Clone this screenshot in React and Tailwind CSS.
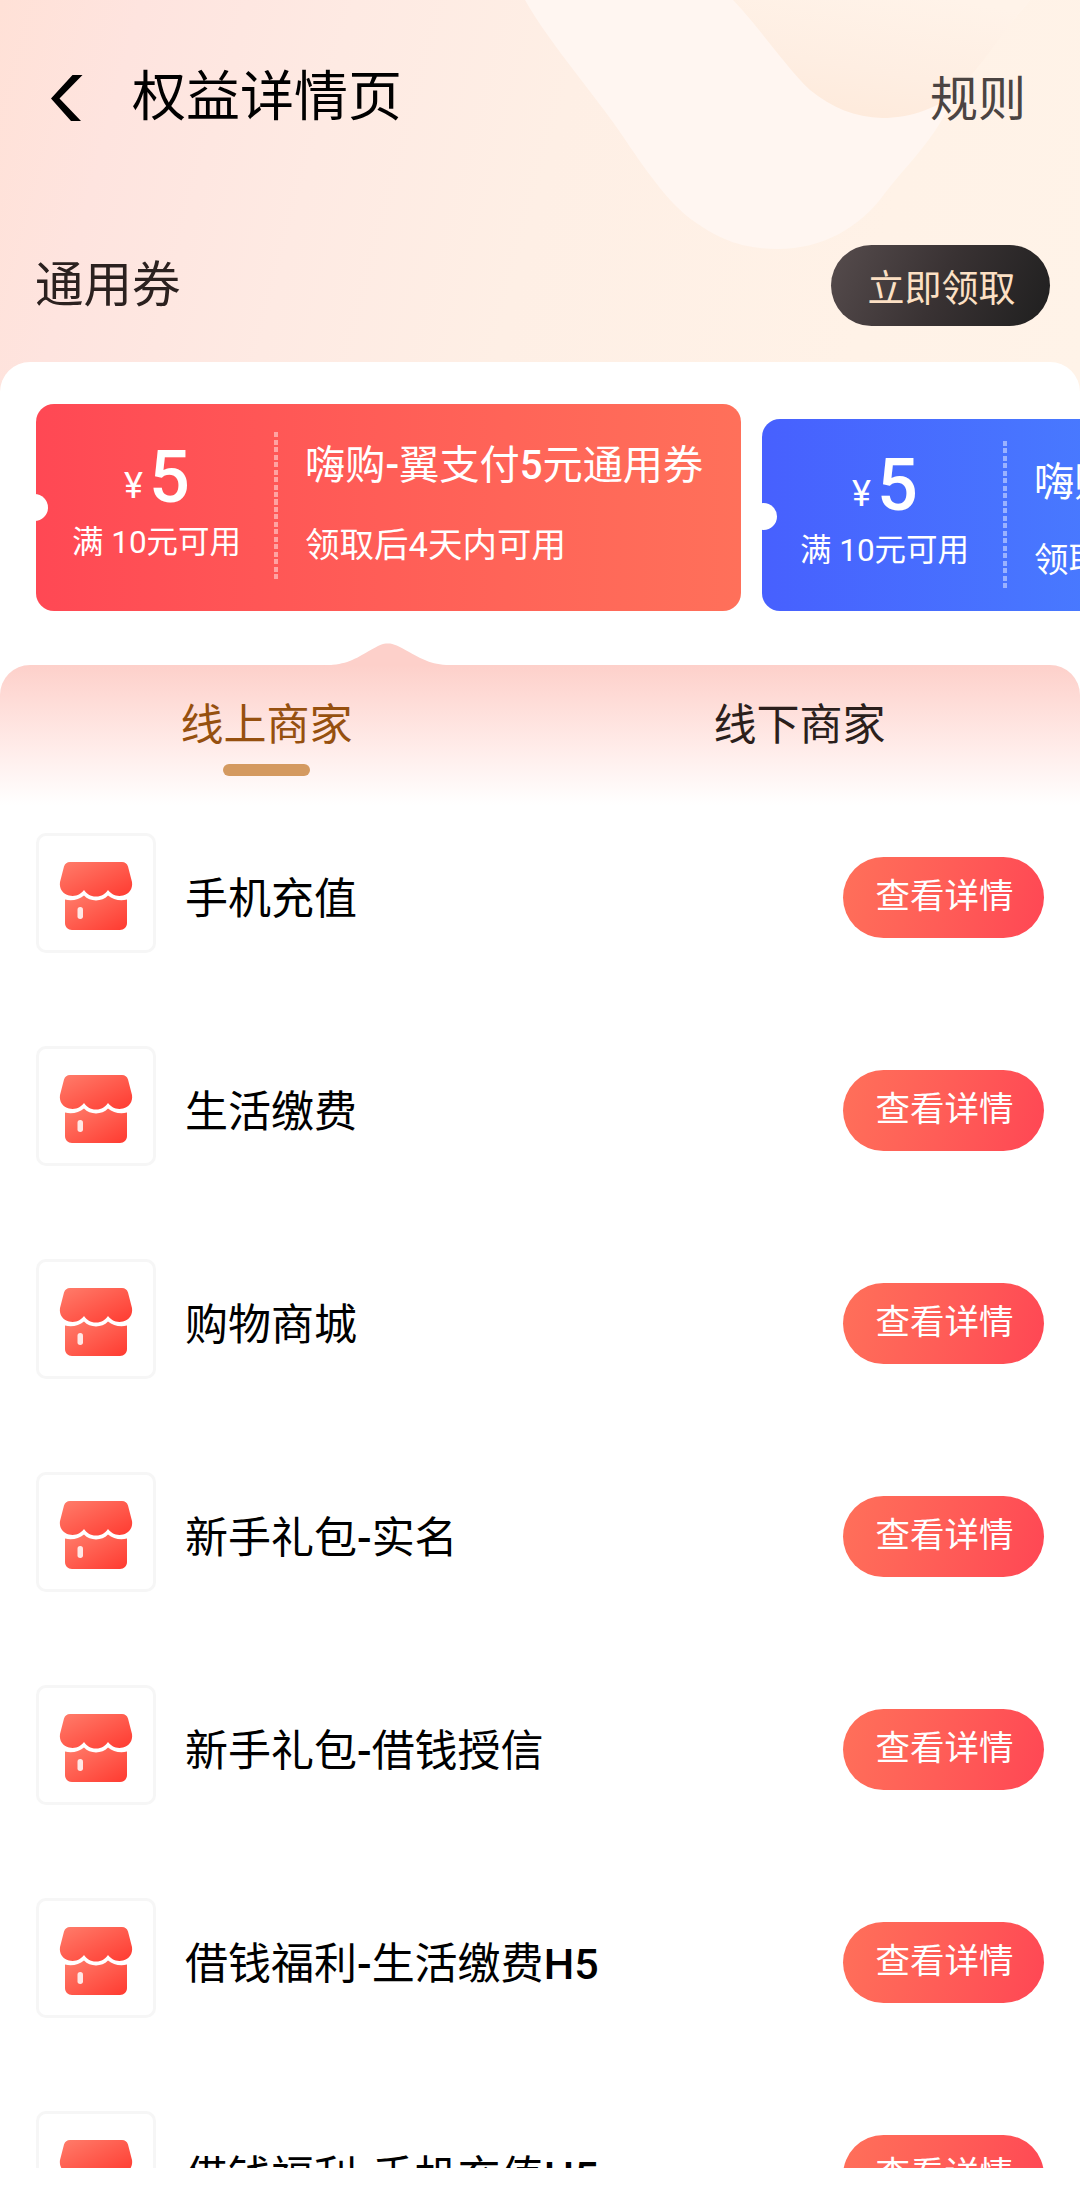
import React from "react";

const MERCHANTS = [
  "手机充值",
  "生活缴费",
  "购物商城",
  "新手礼包-实名",
  "新手礼包-借钱授信",
  "借钱福利-生活缴费H5",
  "借钱福利-手机充值H5",
];

// latin letters, digits and dashes are set heavier than the Chinese text
function MixedText({ children }) {
  return children.split(/([A-Za-z0-9-]+)/).map((part, i) =>
    i % 2 ? (
      <span key={i} className="font-medium">
        {part}
      </span>
    ) : (
      part
    )
  );
}

function HeaderRibbon() {
  return (
    <svg className="absolute inset-0 w-full h-full" viewBox="0 0 1080 400" preserveAspectRatio="none" aria-hidden="true">
      <defs>
        <linearGradient id="petal" x1="0.3" y1="1" x2="0.75" y2="0">
          <stop offset="0" stopColor="#feeadb" />
          <stop offset="0.4" stopColor="#feeee2" />
          <stop offset="1" stopColor="#fff3e9" />
        </linearGradient>
      </defs>
      <path
        d="M525 0H1030C1000 35 965 78 940 123C925 148 907 165 885 193C860 228 822 249 778 249C738 249 715 236 695 222C672 206 655 183 630 147C600 100 550 45 525 0Z"
        fill="#fff6f1"
      />
      <path d="M733 0H1030C1005 28 985 62 958 90C940 108 910 118 882 118C855 117 832 108 810 90C785 66 760 28 733 0Z" fill="url(#petal)" />
    </svg>
  );
}

function StoreIcon() {
  return (
    <svg className="w-[74px] h-[70px]" viewBox="0 0 74 70" aria-hidden="true">
      <defs>
        <linearGradient id="store" x1="0" y1="0" x2="1" y2="1">
          <stop offset="0" stopColor="#ff7d6b" />
          <stop offset="1" stopColor="#ff3a30" />
        </linearGradient>
      </defs>
      <path
        d="M11 1H63C66 1 68 2.500 69 5.500L73 21C74 28 70 33 64 34.500C57 36 52 33 49 29C46 33 43 35.500 37 35.500C31 35.500 28 33 25 29C22 33 17 36 10 34.500C4 33 0 28 1 21L5 5.500C6 2.500 8 1 11 1Z"
        fill="url(#store)"
      />
      <path
        d="M6 38.500C13 40.500 20 38.500 25 34.500C31 41 43 41 49 34.500C54 38.500 61 40.500 68 38.500V62C68 66 65 69 61 69H13C9 69 6 66 6 62Z"
        fill="url(#store)"
      />
      <rect x="18.500" y="46" width="5.500" height="12" rx="2.700" fill="#fff" fillOpacity="0.85" />
    </svg>
  );
}

function Amount({ className }) {
  return (
    <div className={`w-[240px] shrink-0 flex flex-col items-center ${className}`}>
      <div className="flex items-baseline gap-[6px] pl-[2px] h-[72px] leading-[72px]">
        <span className="relative -top-[4px] text-[36px]">¥</span>
        <span className="text-[72px] font-medium">5</span>
      </div>
      <div className="mt-[9px] pl-[1px] h-[40px] leading-[40px] text-[31.5px]">满 10元可用</div>
    </div>
  );
}

function DottedLine({ className }) {
  return (
    <div
      className={`w-[4px] h-[149px] shrink-0 bg-[repeating-linear-gradient(to_bottom,rgba(255,255,255,0.45)_0_5px,transparent_5px_7.5px)] ${className}`}
    />
  );
}

function Notch({ className }) {
  return <div className={`absolute w-[27px] h-[27px] rounded-full bg-white ${className}`} />;
}

function Coupons() {
  return (
    <div className="flex items-end gap-[21px] pl-[36px] h-[249px] shrink-0 pt-[42px] overflow-hidden text-white">
      <div className="relative flex w-[705px] h-[207px] shrink-0 rounded-[18px] bg-linear-to-r from-[#ff4854] to-[#ff705a]">
        <Notch className="left-[-15px] top-[90px]" />
        <Amount className="pt-[38px]" />
        <DottedLine className="mt-[28px] -ml-[2px]" />
        <div className="pl-[27px] pt-[37px]">
          <div className="h-[50px] leading-[50px] text-[40.2px] whitespace-nowrap">
            <MixedText>嗨购-翼支付5元通用券</MixedText>
          </div>
          <div className="mt-[29px] h-[50px] leading-[50px] text-[34.5px] whitespace-nowrap">领取后4天内可用</div>
        </div>
      </div>
      <div className="relative flex w-[705px] h-[192px] shrink-0 rounded-[18px] bg-linear-to-r from-[#4760fe] to-[#4c93ff]">
        <Notch className="left-[-12px] top-[84px]" />
        <Amount className="pt-[31px] pl-[4px]" />
        <DottedLine className="mt-[22px] ml-[1px]" />
        <div className="pl-[27px] pt-[39px]">
          <div className="h-[50px] leading-[50px] text-[40.2px] whitespace-nowrap">
            <MixedText>嗨购-翼支付5元通用券</MixedText>
          </div>
          <div className="mt-[27px] h-[50px] leading-[50px] text-[34.5px] whitespace-nowrap">领取后4天内可用</div>
        </div>
      </div>
    </div>
  );
}

function Tabs() {
  return (
    <div className="relative mt-[54px] h-[140px] shrink-0 rounded-t-[30px] bg-linear-to-b from-[#fdd0ca] to-white">
      {/* pointer towards the active coupon */}
      <svg className="absolute left-[322px] top-[-22px] w-[132px] h-[23px]" viewBox="0 0 132 23" aria-hidden="true">
        <path d="M0 22.500C22 22 30 18 46 8.500C58 2 60 0.500 66 0.500C72 0.500 76 3 88 9.500C102 17 110 22 132 22.500V23H0Z" fill="#fdd0ca" />
      </svg>
      <div className="grid grid-cols-2 pr-[14px] pt-[29px] text-[43px] leading-[62px] text-center">
        <div className="flex flex-col items-center text-[#96500f]">
          线上商家
          <span className="mt-[8px] w-[87px] h-[12px] rounded-full bg-[#d49a60]" />
        </div>
        <div className="text-[#2b1f1c]">线下商家</div>
      </div>
    </div>
  );
}

function MerchantRow({ name }) {
  return (
    <div className="flex items-center h-[120px] mb-[93px] pl-[36px] pr-[36px] shrink-0">
      <div className="flex items-center justify-center w-[120px] h-[120px] pt-[5px] rounded-[10px] border-[3px] border-[#f6f6f6]">
        <StoreIcon />
      </div>
      <div className="ml-[29px] grow text-[43px] leading-[62px] pt-[11px] text-black">
        <MixedText>{name}</MixedText>
      </div>
      <button className="w-[201px] h-[81px] mt-[9px] pl-[2px] pb-[3px] rounded-full bg-linear-105 from-[#ff705a] to-[#ff4654] text-white text-[34.5px] leading-none">
        查看详情
      </button>
    </div>
  );
}

export default function App() {
  return (
    <div className="w-[1080px] h-[2202px] overflow-hidden bg-white font-[Roboto,'Noto_Sans_CJK_SC',sans-serif]">
      <header className="relative h-[400px] bg-[linear-gradient(105deg,#ffe1d7_0%,#fee4df_12%,#feeae3_30%,#feefe5_50%,#fff2e7_80%,#fff3e8_100%)]">
        <HeaderRibbon />
        <div className="relative">
          <div className="flex items-center h-[194px] pl-[50px] pr-[54px]">
            <svg className="w-[33px] h-[48px] mt-[2px]" viewBox="0 0 33 48" aria-hidden="true">
              <path d="M22.500 1H32.500L9.500 24.500L31 47H21L1 24.500Z" fill="#000" />
            </svg>
            <h1 className="ml-[49px] pt-[2px] grow text-[54px] leading-[72px] text-black">权益详情页</h1>
            <span className="pt-[5px] text-[48px] leading-[60px] text-[#4b4442]">规则</span>
          </div>
          <div className="flex items-center justify-between h-[183px] pl-[35px] pr-[30px]">
            <h2 className="text-[48.5px] leading-[60px] text-[#2b211f]">通用券</h2>
            <button className="w-[219px] h-[81px] rounded-full bg-[linear-gradient(115deg,#564c4d,#393233_50%,#1f1f1f)] pt-[7px] pl-[2px] text-[37px] leading-none text-[#fce0c4]">
              立即领取
            </button>
          </div>
        </div>
      </header>
      <main className="relative -mt-[38px] flex flex-col h-[1806px] overflow-hidden rounded-t-[30px] bg-white">
        <Coupons />
        <Tabs />
        <div className="flex flex-col shrink-0 pt-[28px]">
          {MERCHANTS.map((name) => (
            <MerchantRow key={name} name={name} />
          ))}
        </div>
      </main>
    </div>
  );
}
